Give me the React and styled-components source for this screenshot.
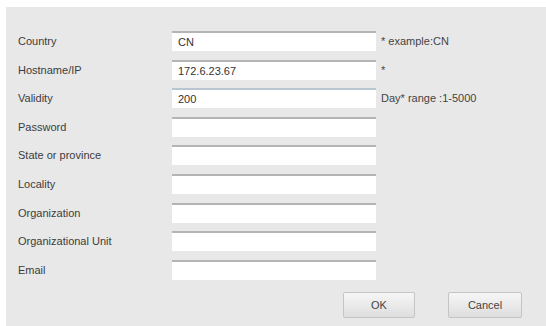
import React from "react";
import styled, { createGlobalStyle } from "styled-components";

const GlobalStyle = createGlobalStyle`
  html, body {
    margin: 0;
    padding: 0;
    background: #ffffff;
  }
  body {
    font-family: "Liberation Sans", Arial, sans-serif;
  }
`;

const Page = styled.div`
  width: 546px;
  height: 326px;
  box-sizing: border-box;
  padding: 7px 0 0 6px;
  background: #ffffff;
  overflow: hidden;
`;

const Panel = styled.div`
  height: 100%;
  box-sizing: border-box;
  background: #e8e8e8;
  padding: 24px 0 0 12px;
  display: flex;
  flex-direction: column;
`;

const Form = styled.div`
  display: grid;
  grid-template-columns: 154px 204px auto;
  grid-auto-rows: 20px;
  row-gap: 8.6px;
  align-items: center;
`;

const Label = styled.div`
  font-size: 11px;
  color: #3c3c3c;
  white-space: nowrap;
`;

const Input = styled.input`
  box-sizing: border-box;
  width: 204px;
  height: 20px;
  margin: 0;
  padding: 0 6px;
  border: none;
  border-top: 2px solid ${({ $focus }) => ($focus ? "#b8c6d2" : "#b4b4b4")};
  background: #ffffff;
  font-family: "Liberation Sans", Arial, sans-serif;
  font-size: 11px;
  color: #333333;
  outline: none;
`;

const Hint = styled.div`
  font-size: 11px;
  color: #444444;
  padding-left: 5px;
  white-space: nowrap;
`;

const Actions = styled.div`
  display: flex;
  gap: 33px;
  margin-top: 12px;
  padding-left: 325px;
`;

const Button = styled.button`
  width: ${({ $w }) => $w}px;
  height: 26px;
  box-sizing: border-box;
  border: 1px solid #c4c4c4;
  border-radius: 2px;
  background: linear-gradient(#f6f6f6, #dedede);
  font-family: "Liberation Sans", Arial, sans-serif;
  font-size: 11px;
  color: #444444;
  padding: 0;
`;

const fields = [
  { label: "Country", value: "CN", hint: "* example:CN" },
  { label: "Hostname/IP", value: "172.6.23.67", hint: "*" },
  { label: "Validity", value: "200", hint: "Day*  range :1-5000", focus: true },
  { label: "Password", value: "", type: "password" },
  { label: "State or province", value: "" },
  { label: "Locality", value: "" },
  { label: "Organization", value: "" },
  { label: "Organizational Unit", value: "" },
  { label: "Email", value: "" },
];

const App = () => {
  return (
    <Page>
      <GlobalStyle />
      <Panel>
        <Form>
          {fields.map((f) => (
            <React.Fragment key={f.label}>
              <Label>{f.label}</Label>
              <Input
                type={f.type || "text"}
                defaultValue={f.value}
                $focus={f.focus}
              />
              <Hint>{f.hint || ""}</Hint>
            </React.Fragment>
          ))}
        </Form>
        <Actions>
          <Button $w={72}>OK</Button>
          <Button $w={74}>Cancel</Button>
        </Actions>
      </Panel>
    </Page>
  );
};

export default App;
